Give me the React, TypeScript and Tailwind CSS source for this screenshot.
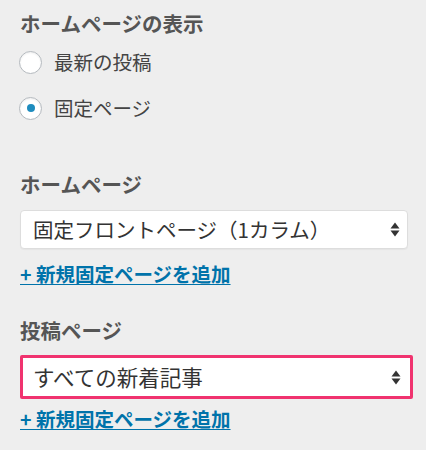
import React from 'react';

const jp = { fontFamily: '"Noto Sans CJK JP", "Noto Sans", sans-serif' };

function Arrows() {
  return (
    <svg width="10" height="15" viewBox="0 0 10 15" className="shrink-0">
      <path d="M5 0.5 L9.5 6.5 L0.5 6.5 Z" fill="#333" />
      <path d="M5 14.5 L9.5 8.5 L0.5 8.5 Z" fill="#333" />
    </svg>
  );
}

function Radio({ label, checked }: { label: string; checked?: boolean }) {
  return (
    <div className="flex items-center h-6 gap-3">
      <span className="w-[23px] h-[23px] -ml-[1px] rounded-full border border-[#b4b9be] bg-white shadow-[inset_0_1px_2px_rgba(0,0,0,0.07)] flex items-center justify-center shrink-0">
        {checked && <span className="w-2 h-2 rounded-full bg-[#1e8cbe]" />}
      </span>
      <span className="text-[19.5px] leading-6 text-[#444]">{label}</span>
    </div>
  );
}

function AddLink() {
  return (
    <a className="block w-fit text-[19.5px] leading-6 font-bold text-[#0073aa] underline underline-offset-2 decoration-1">
      +&nbsp;新規固定ページを追加
    </a>
  );
}

export default function App() {
  return (
    <div className="w-[426px] h-[450px] bg-[#eeeeee] px-5 overflow-hidden" style={jp}>
      <h3 className="mt-[9px] text-[20.5px] leading-7 font-bold text-[#555]">ホームページの表示</h3>
      <div className="mt-[13px]">
        <Radio label="最新の投稿" />
      </div>
      <div className="mt-[22px]">
        <Radio label="固定ページ" checked />
      </div>

      <h3 className="mt-[50px] text-[20.5px] leading-7 font-bold text-[#555]">ホームページ</h3>
      <div className="mt-3 w-[388px] h-[39px] bg-white border border-[#dddddd] rounded-[4px] shadow-[0_1px_1px_rgba(0,0,0,0.04)] flex items-center justify-between pl-[12px] pr-[7px]">
        <span className="text-[20.5px] text-[#333]">固定フロントページ（1カラム）</span>
        <Arrows />
      </div>
      <div className="mt-[13px]">
        <AddLink />
      </div>

      <h3 className="mt-[30px] text-[20.5px] leading-7 font-bold text-[#555]">投稿ページ</h3>
      <div className="mt-[11px] w-[393px] h-[44px] border-[3px] border-[#f0336f] rounded-[2px] bg-white flex items-center justify-between pl-[10px] pr-[9px]">
        <span className="text-[21.5px] text-[#333]">すべての新着記事</span>
        <Arrows />
      </div>
      <div className="mt-2">
        <AddLink />
      </div>
    </div>
  );
}
